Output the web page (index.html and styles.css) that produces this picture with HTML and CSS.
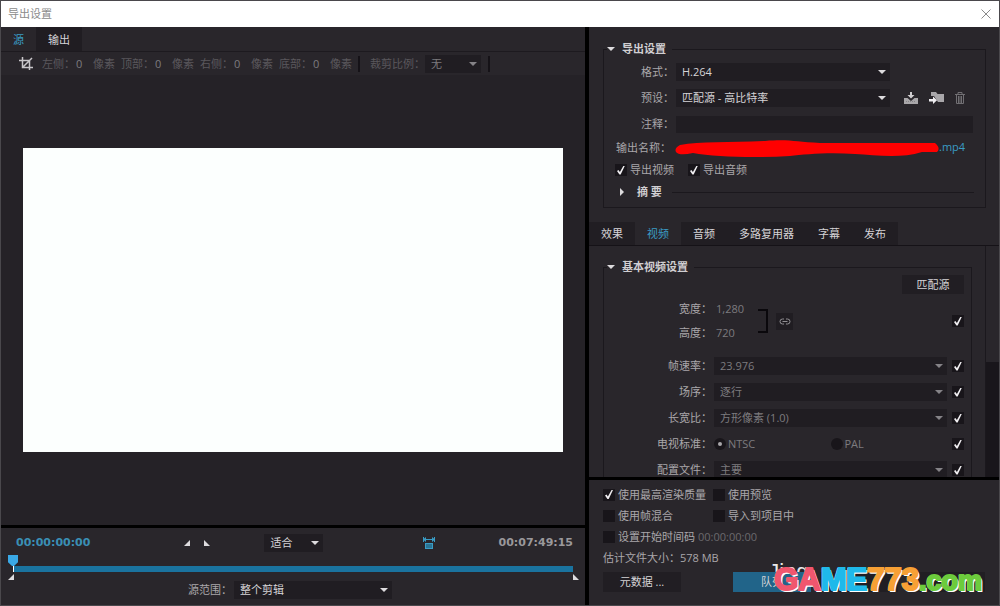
FILE: index.html
```html
<!DOCTYPE html>
<html lang="zh-CN">
<head>
<meta charset="UTF-8">
<title>导出设置</title>
<link rel="stylesheet" href="styles.css">
</head>
<body>
<div class="window">
	<header class="titlebar">
		<span>导出设置</span>
		<button class="close" aria-label="关闭"><svg width="12" height="12" viewBox="0 0 12 12"><path d="M1.500 1.500L10.500 10.500M10.500 1.500L1.500 10.500" stroke="#8a8a8a" fill="none"/></svg></button>
	</header>
	<div class="main">
		<!-- preview -->
		<section class="left">
			<nav class="view-tabs">
				<button class="on">源</button>
				<button class="dark">输出</button>
			</nav>
			<div class="cropbar">
				<button class="crop" aria-label="裁剪"><svg width="16" height="14" viewBox="0 0 16 14"><path d="M1 3.500H11.500V13M4.500 0V10.500H15M5 10L14 1" stroke="#c9c7ca" stroke-width="1.500" fill="none"/></svg></button>
				<div class="crop-item"><label for="cl">左侧：</label><input id="cl" value="0" disabled><span>像素</span></div>
				<div class="crop-item"><label for="ct">顶部：</label><input id="ct" value="0" disabled><span>像素</span></div>
				<div class="crop-item"><label for="cr">右侧：</label><input id="cr" value="0" disabled><span>像素</span></div>
				<div class="crop-item"><label for="cb">底部：</label><input id="cb" value="0" disabled><span>像素</span></div>
				<i class="sep"></i>
				<label class="ratio" for="ratio">裁剪比例：</label>
				<span class="select dim ratio-select"><select id="ratio"><option>无</option></select></span>
				<i class="sep"></i>
			</div>
			<div class="preview"><div class="frame"></div></div>
			<div class="transport">
				<div class="transport-row">
					<span class="timecode">00:00:00:00</span>
					<div class="points">
						<button aria-label="设置入点"><svg width="6" height="6" viewBox="0 0 6 6"><path d="M6 0V6H0Z" fill="#dddbde"/></svg></button>
						<button aria-label="设置出点"><svg width="6" height="6" viewBox="0 0 6 6"><path d="M0 0V6H6Z" fill="#dddbde"/></svg></button>
					</div>
					<span class="select zoom"><select aria-label="缩放"><option>适合</option></select></span>
					<button class="aspect" aria-label="长宽比校正"><svg width="14" height="13" viewBox="0 0 14 13"><path d="M1 2.500H13M1.500 0V5M12.500 0V5" stroke="#3a9cc5" fill="none"/><path d="M1 2.500L4 0V5ZM13 2.500L10 0V5Z" fill="#3a9cc5"/><rect x="3.500" y="6.500" width="7" height="5" fill="#2a7494" stroke="#3a9cc5"/></svg></button>
					<span class="timecode total">00:07:49:15</span>
				</div>
				<div class="timeline">
					<input type="range" value="0" aria-label="播放指示器">
					<div class="bar"></div>
					<div class="marks">
						<svg width="6" height="6" viewBox="0 0 6 6"><path d="M6 0V6H0Z" fill="#dddbde"/></svg>
						<svg width="6" height="6" viewBox="0 0 6 6"><path d="M0 0V6H6Z" fill="#dddbde"/></svg>
					</div>
				</div>
				<div class="range-row">
					<label for="range">源范围：</label>
					<span class="select range-select"><select id="range"><option>整个剪辑</option></select></span>
				</div>
			</div>
		</section>

		<!-- settings -->
		<section class="right">
			<fieldset class="group">
				<legend><button class="tri down" aria-label="折叠"></button>导出设置</legend>
				<div class="fields">
					<label for="format">格式：</label>
					<span class="select"><select id="format"><option>H.264</option></select></span>
					<span></span>
					<label for="preset">预设：</label>
					<span class="select"><select id="preset"><option>匹配源 - 高比特率</option></select></span>
					<div class="tools">
						<button aria-label="保存预设"><svg width="14" height="12" viewBox="0 0 14 12"><path d="M6 0H8V3H10.500L7 6.500L3.500 3H6Z" fill="#d0ced1"/><path d="M0 6H3.500L7 9L10.500 6H14V12H0Z" fill="#a9a7aa"/><path d="M2 9.500H12" stroke="#858386" stroke-dasharray="1 1"/></svg></button>
						<button aria-label="导入预设"><svg width="15" height="12" viewBox="0 0 15 12"><path d="M2 0H7L8.500 2H15V10H9L5 4H2Z" fill="#a9a7aa"/><path d="M0 7H4V4.500L8 8.300L4 12V9.500H0Z" fill="#efedf0"/></svg></button>
						<button aria-label="删除预设"><svg width="10" height="12" viewBox="0 0 10 12"><path d="M0 2.500H10M3 2V.5H7V2M1.500 3V11.500H8.500V3M3.500 4V11M5 4V11M6.500 4V11" stroke="#716f73" fill="none"/></svg></button>
					</div>
					<label for="note">注释：</label>
					<input class="note" id="note">
				</div>
				<div class="output">
					<span>输出名称：</span>
					<a href="#"><svg width="264" height="18" viewBox="0 0 264 18"><path d="M5 6C25 2 55 4 90 2C115 0 120 3 145 4L260 4Q266 9 262 13L247 13C225 20 200 16 180 15C155 13 130 15 115 17C80 19 40 18 18 14Q4 17 1 13Q-1 9 5 6Z" fill="#f00"/></svg>.mp4</a>
				</div>
				<div class="exports">
					<label><input type="checkbox" checked>导出视频</label>
					<label><input type="checkbox" checked>导出音频</label>
				</div>
				<div class="summary"><button class="tri side" aria-label="展开"></button><b>摘 要</b><i></i></div>
			</fieldset>

			<nav class="tabs">
				<button>效果</button>
				<button class="on">视频</button>
				<button>音频</button>
				<button>多路复用器</button>
				<button>字幕</button>
				<button>发布</button>
			</nav>

			<div class="scroller">
				<fieldset class="group video">
					<legend><button class="tri down" aria-label="折叠"></button>基本视频设置</legend>
					<button class="btn match">匹配源</button>
					<div class="size">
						<div class="size-fields">
							<label for="w">宽度：</label><input id="w" value="1,280" disabled>
							<label for="h">高度：</label><input id="h" value="720" disabled>
						</div>
						<i class="bracket"></i>
						<button class="link" aria-label="链接"><svg width="12" height="7" viewBox="0 0 12 7"><path d="M5 1H3.500A2.500 2.500 0 0 0 3.500 6H5M7 1H8.500A2.500 2.500 0 0 1 8.500 6H7M3.500 3.500H8.500" stroke="#918f93" fill="none"/></svg></button>
						<input type="checkbox" aria-label="匹配尺寸" checked>
					</div>
					<div class="vrow"><label for="fps">帧速率：</label><span class="select dim"><select id="fps"><option>23.976</option></select></span><input type="checkbox" aria-label="匹配帧速率" checked></div>
					<div class="vrow"><label for="order">场序：</label><span class="select dim"><select id="order"><option>逐行</option></select></span><input type="checkbox" aria-label="匹配场序" checked></div>
					<div class="vrow"><label for="par">长宽比：</label><span class="select dim"><select id="par"><option>方形像素 (1.0)</option></select></span><input type="checkbox" aria-label="匹配长宽比" checked></div>
					<div class="vrow"><span class="name">电视标准：</span>
						<div class="radios">
							<label><input type="radio" name="tv" checked>NTSC</label>
							<label><input type="radio" name="tv">PAL</label>
						</div>
						<input type="checkbox" aria-label="匹配电视标准" checked></div>
					<div class="vrow"><label for="profile">配置文件：</label><span class="select dim"><select id="profile"><option>主要</option></select></span><input type="checkbox" aria-label="匹配配置文件" checked></div>
				</fieldset>
				<div class="scrollbar"><div class="thumb"></div></div>
			</div>

			<footer class="bottom">
				<div class="options">
					<label><input type="checkbox" checked>使用最高渲染质量</label>
					<label><input type="checkbox">使用预览</label>
					<label><input type="checkbox">使用帧混合</label>
					<label><input type="checkbox">导入到项目中</label>
					<div class="start"><label><input type="checkbox">设置开始时间码</label><span class="code">00:00:00:00</span></div>
					<div class="estimate">估计文件大小：<span>578 MB</span></div>
				</div>
				<div class="actions">
					<button class="btn meta">元数据 ...</button>
					<button class="btn queue">队列</button>
					<button class="btn" aria-label="导出"></button>
					<button class="btn" aria-label="取消"></button>
				</div>
			</footer>
		</section>
	</div>
	<div class="watermark"><span class="ghost">Jing</span><span class="red">GA</span><span class="cyan">ME</span><span class="orange">773</span><span class="green">.com</span></div>
</div>
</body>
</html>
```

FILE: styles.css
```css
* {
	box-sizing: border-box;
	margin: 0;
	padding: 0;
}
body, button, input, select {
	font: 11px/16px "Open Sans", "Noto Sans CJK SC", sans-serif;
	color: #a9a7aa;
}
body {
	background: #29262b;
}
button, input, select {
	background: none;
	border: 0;
	border-radius: 0;
	outline: 0;
	appearance: none;
}
svg {
	display: block;
}
label, button {
	white-space: nowrap;
}
.window {
	position: relative;
	height: 100vh;
	min-height: 606px;
	display: flex;
	flex-direction: column;
	border: 1px solid #4a484c;
}
.titlebar {
	display: flex;
	align-items: center;
	justify-content: space-between;
	height: 26px;
	padding: 0 7px;
	background: #fff;
	color: #8b8b8b;
}
.main {
	flex: 1;
	min-height: 0;
	display: flex;
}

/* 左侧 */
.left {
	flex: 1;
	min-width: 0;
	display: flex;
	flex-direction: column;
}
.view-tabs {
	display: flex;
	height: 25px;
	border-bottom: 1px solid #1d1a1f;
}
.view-tabs button {
	padding: 2px 12px 0;
	color: #d6d4d7;
}
.view-tabs .on, .tabs .on {
	color: #3a9cc5;
}
.view-tabs .dark {
	background: #201d22;
}
.cropbar {
	display: flex;
	align-items: center;
	height: 23px;
	padding-left: 17px;
	color: #5b585d;
}
.crop {
	margin-right: 8px;
}
.crop-item {
	display: flex;
	width: 79px;
}
.crop-item input {
	width: 17px;
	color: #7d7b7f;
}
.crop-item label {
	width: 34px;
}
.sep {
	width: 2px;
	height: 16px;
	background: #151217;
}
.ratio {
	margin-left: 10px;
}
.ratio-select {
	width: 56px;
	margin-right: 7px;
}
.preview {
	flex: 1;
	display: flex;
	align-items: center;
	padding: 0 22px;
	background: #252227;
}
.frame {
	flex: 1;
	aspect-ratio: 16 / 9;
	background: #fcfffe;
}
.transport {
	height: 80px;
	border-top: 3px solid #000;
	padding-top: 5px;
}
.transport-row {
	display: flex;
	align-items: center;
	height: 20px;
	padding: 0 12px 0 15px;
}
.timecode {
	font: bold 11px/16px "DejaVu Sans", sans-serif;
	color: #3a8fb5;
}
.points {
	display: flex;
	gap: 14px;
	margin-left: 94px;
}
.zoom {
	width: 59px;
	margin-left: 54px;
}
.aspect {
	margin-left: 99px;
}
.total {
	margin-left: auto;
	color: #9a989b;
}
.timeline {
	padding: 2px 6px 0 7px;
}
.timeline input {
	display: block;
	width: 100%;
	height: 11px;
}
.timeline input::-webkit-slider-thumb {
	appearance: none;
	width: 10px;
	height: 11px;
	background: #3aa9e6;
	clip-path: polygon(0 0, 100% 0, 100% 65%, 60% 100%, 40% 100%, 0 65%);
}
.bar {
	height: 6px;
	margin: 0 6px 2px 5px;
	background: #1a739f;
	border-left: 1px solid #fff;
}
.marks {
	display: flex;
	justify-content: space-between;
}
.range-row {
	display: flex;
	align-items: center;
	height: 20px;
	padding-left: 187px;
}
.range-select {
	width: 158px;
	margin-left: 2px;
}

/* 下拉框 */
.select {
	display: grid;
	align-items: center;
	background: #201d22;
}
.select select {
	grid-area: 1 / 1;
	height: 18px;
	min-width: 0;
	padding: 0 18px 0 6px;
	color: #d6d4d7;
}
.select::after {
	content: "";
	grid-area: 1 / 1;
	justify-self: end;
	margin-right: 4px;
	border: 4px solid transparent;
	border-top-color: #dddbde;
	border-bottom: 0;
	pointer-events: none;
}
.select.dim select {
	color: #7d7b7f;
}
.select.dim::after {
	border-top-color: #858387;
}

input[type=checkbox] {
	flex: none;
	display: grid;
	place-items: center;
	width: 12px;
	height: 12px;
	background: #18151a;
}
input[type=checkbox]:checked::before {
	content: "";
	width: 8px;
	height: 9px;
	background: #efedf0;
	clip-path: polygon(0 60%, 18% 50%, 36% 72%, 82% 0, 100% 0, 46% 100%, 30% 100%);
}

/* 右侧 */
.right {
	width: 414px;
	display: flex;
	flex-direction: column;
	border-left: 4px solid #000;
}
.group {
	min-width: 0;
	margin: 14px 13px 0 14px;
	padding: 5px 11px 4px;
	border: 1px solid #1b181d;
}
.group legend {
	display: flex;
	align-items: center;
	gap: 7px;
	height: 16px;
	margin-left: -8px;
	padding-right: 6px;
	font-weight: bold;
	color: #d0ced1;
	background: #29262b;
}
.tri {
	border: 4px solid transparent;
}
.tri.down {
	border-top-color: #dddbde;
	border-bottom: 0;
}
.tri.side {
	border-left-color: #dddbde;
	border-right: 0;
}
.fields {
	display: grid;
	grid-template-columns: 59px 214px 1fr;
	grid-auto-rows: 20px;
	align-items: center;
	gap: 6px 2px;
	padding-bottom: 3px;
}
.fields label {
	text-align: right;
}
.note {
	grid-column: span 2;
	width: 297px;
	height: 17px;
	background: #201d22;
}
.tools {
	display: flex;
	align-items: center;
	gap: 11px;
	padding-left: 12px;
}
.output, .exports, .summary {
	display: flex;
	align-items: center;
	height: 22px;
}
.output a {
	display: flex;
	color: #3a9cc5;
	text-decoration: none;
}
.output span {
	width: 59px;
	white-space: nowrap;
	margin-left: 1px;
}
.exports {
	gap: 14px;
}
.exports label, .options label {
	display: flex;
	align-items: center;
	gap: 3px;
}
.summary b {
	margin: 0 10px 0 13px;
	color: #d0ced1;
}
.summary .side {
	margin-left: 5px;
}
.summary i {
	flex: 1;
	height: 1px;
	background: #1b181d;
}
.tabs {
	display: flex;
	height: 24px;
	margin-top: 14px;
	border-bottom: 1px solid #151217;
}
.tabs button {
	padding: 0 12px;
	background: #211e23;
	color: #d6d4d7;
}
.tabs .on {
	background: #29262b;
}
.scroller {
	flex: 1;
	min-height: 0;
	display: flex;
	overflow: hidden;
}
.video {
	flex: 1;
	margin-top: 13px;
	padding: 0 7px 0 11px;
	align-self: flex-start;
}
.btn {
	height: 20px;
	background: #211e23;
	color: #d6d4d7;
}
.match {
	display: block;
	width: 62px;
	height: 19px;
	margin: 0 0 3px auto;
}
.size {
	display: flex;
	align-items: center;
	margin-bottom: 8px;
}
.size-fields {
	display: grid;
	grid-template-columns: 97px 42px;
	grid-auto-rows: 24px;
	align-items: center;
	column-gap: 4px;
}
.size-fields label {
	text-align: right;
}
.size-fields input {
	width: 42px;
	color: #7d7b7f;
}
.bracket {
	width: 10px;
	height: 24px;
	border: 2px solid #0a080c;
	border-left: 0;
}
.link {
	display: grid;
	place-items: center;
	width: 17px;
	height: 17px;
	margin-left: 8px;
	background: #201d22;
}
.size input[type=checkbox] {
	margin-left: auto;
}
.vrow {
	display: grid;
	grid-template-columns: 97px 1fr 12px;
	align-items: center;
	column-gap: 2px;
	height: 26px;
}
.vrow > label, .name {
	text-align: right;
}
.vrow .select, .radios {
	margin-right: 3px;
}
.radios {
	display: grid;
	grid-template-columns: 1fr 1fr;
	color: #7d7b7f;
}
.radios label {
	display: flex;
	align-items: center;
	gap: 2px;
}
input[type=radio] {
	display: grid;
	place-items: center;
	width: 12px;
	height: 12px;
	border-radius: 6px;
	background: #18151a;
}
input[type=radio]:checked::before {
	content: "";
	width: 4px;
	height: 4px;
	border-radius: 2px;
	background: #a9a7aa;
}
.scrollbar {
	width: 14px;
	border-left: 1px solid #1b181d;
	display: flex;
	align-items: flex-end;
}
.thumb {
	width: 100%;
	height: 50%;
	background: #19161b;
}
.bottom {
	padding: 4px 14px 13px;
	border-top: 3px solid #000;
}
.options {
	display: grid;
	grid-template-columns: 110px 1fr;
	grid-auto-rows: 21px;
	align-items: center;
}
.start, .estimate {
	grid-column: span 2;
	display: flex;
}
.code {
	margin-left: 3px;
	color: #6b696d;
}
.actions {
	display: flex;
	gap: 9px;
	padding-top: 4px;
}
.actions .btn {
	width: 78px;
}
.actions .meta {
	margin-right: auto;
}
.actions .queue {
	background: #216489;
}

.watermark {
	position: absolute;
	right: 17px;
	bottom: 7px;
	font: bold 31px/34px "Liberation Sans", sans-serif;
	text-shadow: 2px 2px 0 #fff, 1px 2px 0 #fff, -1px 0 0 #fff;
	-webkit-text-stroke: 2px;
	pointer-events: none;
}
.ghost {
	position: absolute;
	left: -6px;
	top: -3px;
	z-index: -1;
	font: 22px/24px "Liberation Sans", sans-serif;
	color: #e8e8ea;
	text-shadow: none;
	-webkit-text-stroke: 0;
}
.red { color: #f0566e; }
.cyan { color: #1fb9ea; }
.orange { color: #f7a035; }
.green {
	font-size: 27px;
	color: #6ccb3c;
}
```
